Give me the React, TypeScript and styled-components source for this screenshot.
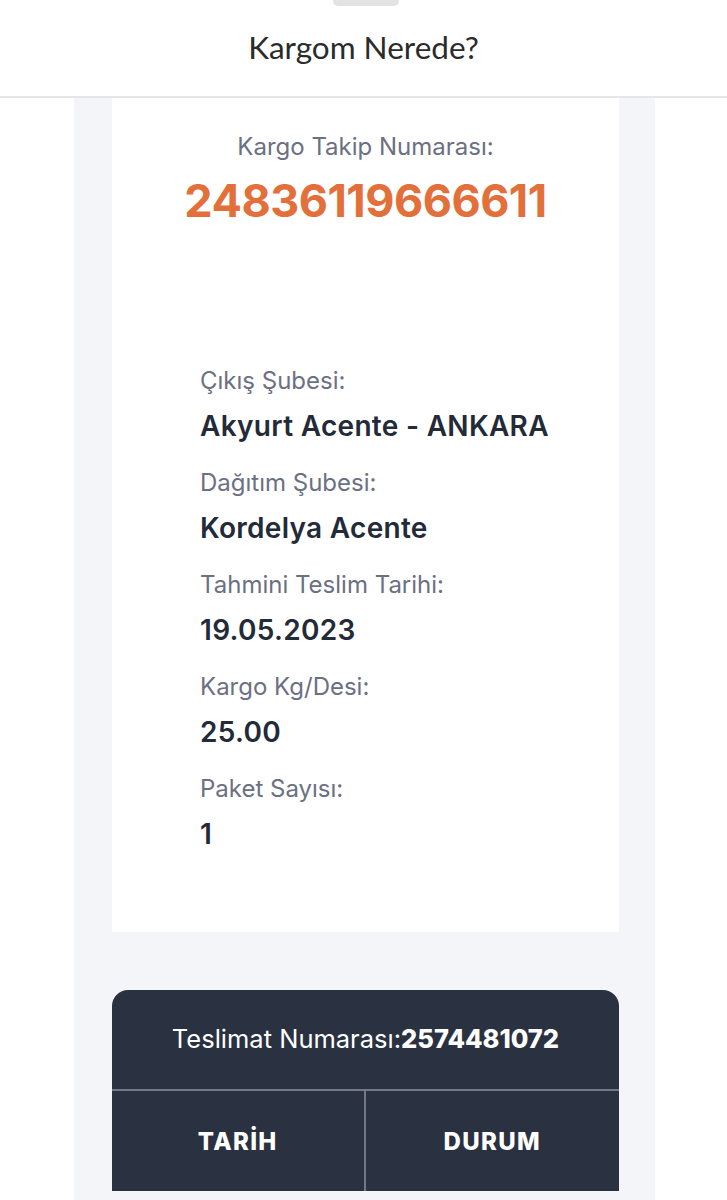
import React from "react";
import styled, { createGlobalStyle } from "styled-components";

const GlobalStyle = createGlobalStyle`
  html, body {
    margin: 0;
    padding: 0;
    background: #ffffff;
  }
  body {
    font-family: "Inter", "Noto Sans", sans-serif;
  }
  * {
    box-sizing: border-box;
  }
`;

const Page = styled.div`
  width: 727px;
  height: 1200px;
  overflow: hidden;
  display: flex;
  flex-direction: column;
  background: #ffffff;
`;

const Header = styled.header`
  position: relative;
  height: 98px;
  flex-shrink: 0;
  display: flex;
  align-items: center;
  justify-content: center;
  border-bottom: 2px solid #e6e6e8;
  background: #ffffff;
`;

const Grabber = styled.div`
  position: absolute;
  top: -4px;
  left: 333px;
  width: 66px;
  height: 10px;
  border-radius: 5px;
  background: #e3e3e5;
`;

const Title = styled.h1`
  margin: 0 0 2px;
  font-family: "Lato", sans-serif;
  font-weight: 400;
  font-size: 31.5px;
  color: #2b2b2b;
`;

const Column = styled.main`
  flex: 1;
  margin: 0 72px 0 74px;
  padding: 0 36px 0 38px;
  background: #f4f5f8;
  display: flex;
  flex-direction: column;
`;

const InfoCard = styled.section`
  background: #ffffff;
  height: 834px;
  padding-top: 34px;
  display: flex;
  flex-direction: column;
`;

const TrackLabel = styled.div`
  text-align: center;
  font-size: 24px;
  color: #6b7082;
`;

const TrackNumber = styled.div`
  margin-top: 12px;
  text-align: center;
  font-size: 45px;
  font-weight: 700;
  letter-spacing: -0.5px;
  color: #e3703a;
`;

const Details = styled.dl`
  margin: 138px 0 0 88px;
  display: flex;
  flex-direction: column;
`;

const Label = styled.dt`
  font-size: 24px;
  color: #6b7082;
  line-height: 30px;
`;

const Value = styled.dd`
  margin: 15px 0 27px;
  font-size: 28px;
  font-weight: 600;
  letter-spacing: 0.3px;
  color: #232a38;
  line-height: 30px;
`;

const Table = styled.section`
  margin-top: 58px;
  border-radius: 16px 16px 0 0;
  overflow: hidden;
  background: #2a3140;
  color: #ffffff;
`;

const TableTitle = styled.div`
  height: 101px;
  display: flex;
  align-items: center;
  justify-content: center;
  font-size: 25.5px;
  border-bottom: 2px solid #737987;
  padding-bottom: 2px;

  b {
    font-weight: 800;
  }
`;

const HeadRow = styled.div`
  display: grid;
  grid-template-columns: 1fr 1fr;
  height: 100px;
`;

const HeadCell = styled.div<{ $divider?: boolean }>`
  display: flex;
  align-items: center;
  justify-content: center;
  font-size: 24px;
  font-weight: 800;
  letter-spacing: 1.3px;
  border-right: ${(p) => (p.$divider ? "2px solid #737987" : "none")};
`;

const details = [
  { label: "Çıkış Şubesi:", value: "Akyurt Acente - ANKARA" },
  { label: "Dağıtım Şubesi:", value: "Kordelya Acente" },
  { label: "Tahmini Teslim Tarihi:", value: "19.05.2023" },
  { label: "Kargo Kg/Desi:", value: "25.00" },
  { label: "Paket Sayısı:", value: "1" },
];

export default function App() {
  return (
    <>
      <GlobalStyle />
      <Page>
        <Header>
          <Grabber />
          <Title>Kargom Nerede?</Title>
        </Header>
        <Column>
          <InfoCard>
            <TrackLabel>Kargo Takip Numarası:</TrackLabel>
            <TrackNumber>24836119666611</TrackNumber>
            <Details>
              {details.map((d) => (
                <React.Fragment key={d.label}>
                  <Label>{d.label}</Label>
                  <Value>{d.value}</Value>
                </React.Fragment>
              ))}
            </Details>
          </InfoCard>
          <Table>
            <TableTitle>
              Teslimat Numarası:<b>2574481072</b>
            </TableTitle>
            <HeadRow>
              <HeadCell $divider>TARİH</HeadCell>
              <HeadCell>DURUM</HeadCell>
            </HeadRow>
          </Table>
        </Column>
      </Page>
    </>
  );
}
